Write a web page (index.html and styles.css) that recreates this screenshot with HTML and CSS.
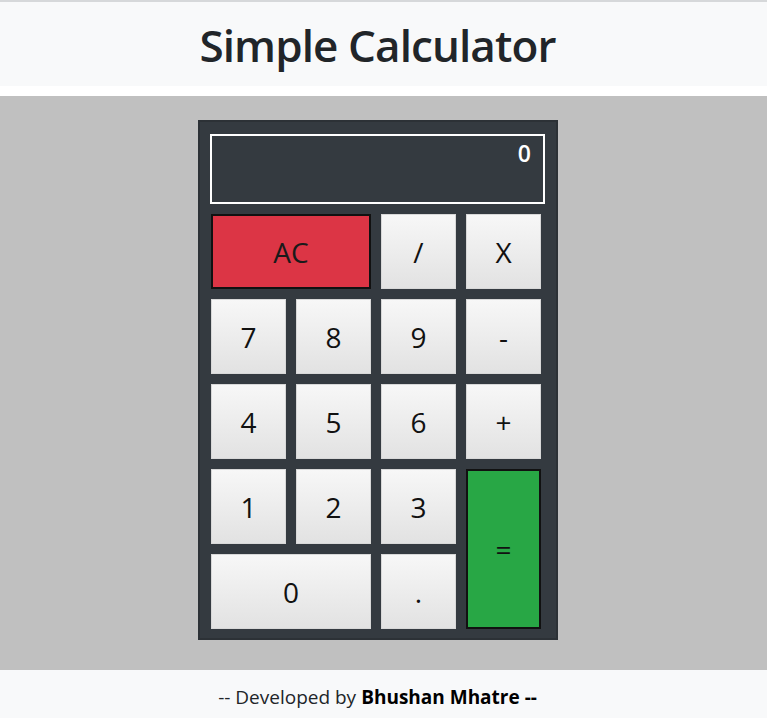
FILE: index.html
```html
<!DOCTYPE html>
<html>
<head>
<meta charset="utf-8">
<title>Simple Calculator</title>
<link rel="stylesheet" href="styles.css">
</head>
<body>
<header class="header">
  <h1 class="title">Simple Calculator</h1>
</header>
<main class="stage">
  <div class="calc">
    <div class="display">0</div>
    <div class="keys">
      <button class="key key-ac">AC</button>
      <button class="key">/</button>
      <button class="key">X</button>
      <button class="key">7</button>
      <button class="key">8</button>
      <button class="key">9</button>
      <button class="key">-</button>
      <button class="key">4</button>
      <button class="key">5</button>
      <button class="key">6</button>
      <button class="key">+</button>
      <button class="key">1</button>
      <button class="key">2</button>
      <button class="key">3</button>
      <button class="key key-eq">=</button>
      <button class="key key-zero">0</button>
      <button class="key">.</button>
    </div>
  </div>
</main>
<footer class="footer">-- Developed by <b>Bhushan Mhatre --</b></footer>
</body>
</html>
```
FILE: styles.css
```css
html, body {
  margin: 0;
  padding: 0;
}
body {
  font-family: "Open Sans", "Noto Sans", sans-serif;
  color: #212529;
  background: #ffffff;
  width: 767px;
  height: 718px;
  overflow: hidden;
}
.header {
  margin-top: 0;
  height: 86px;
  background: #f8f9fa;
  border-top: 2px solid #d6d8da;
  box-sizing: border-box;
  display: flex;
  justify-content: center;
  align-items: center;
}
.title {
  margin: 0;
  font-size: 44px;
  font-weight: 600;
  letter-spacing: -0.9px;
  color: #212529;
  line-height: 1;
  padding-right: 12px;
  padding-top: 2px;
}
.stage {
  margin-top: 10px;
  height: 574px;
  background: #c0c0c0;
  padding-top: 24px;
  box-sizing: border-box;
}
.calc {
  margin-left: 198px;
  width: 360px;
  height: 520px;
  box-sizing: border-box;
  background: #343a40;
  border: 2px solid #2c3136;
  padding: 12px 11px 0 10px;
}
.display {
  height: 70px;
  box-sizing: border-box;
  border: 2px solid #ffffff;
  color: #ffffff;
  font-size: 23px;
  font-weight: 600;
  text-align: right;
  padding: 1px 12px 0 0;
  line-height: 32px;
}
.keys {
  margin-top: 10px;
  margin-left: 1px;
  display: grid;
  grid-template-columns: repeat(4, 75px);
  grid-auto-rows: 75px;
  gap: 10px;
}
.key {
  font-family: "Open Sans", "Noto Sans", sans-serif;
  font-size: 28px;
  color: #111111;
  background: linear-gradient(#f7f7f7, #e2e2e2);
  border: 1px solid #d8d8d8;
  padding: 0;
  margin: 0;
}
.key-ac {
  grid-column: span 2;
  background: #dc3545;
  border: 2px solid #111111;
  color: #1a1a1a;
}
.key-eq {
  grid-row: span 2;
  background: #28a745;
  border: 2px solid #111111;
}
.key-zero {
  grid-column: span 2;
}
.footer {
  height: 48px;
  box-sizing: border-box;
  padding: 5px 12px 0 0;
  background: #f8f9fa;
  display: flex;
  justify-content: center;
  align-items: center;
  font-size: 19px;
  color: #212529;
}
.footer b {
  font-weight: 700;
  margin-left: 5px;
  color: #000;
}
```
